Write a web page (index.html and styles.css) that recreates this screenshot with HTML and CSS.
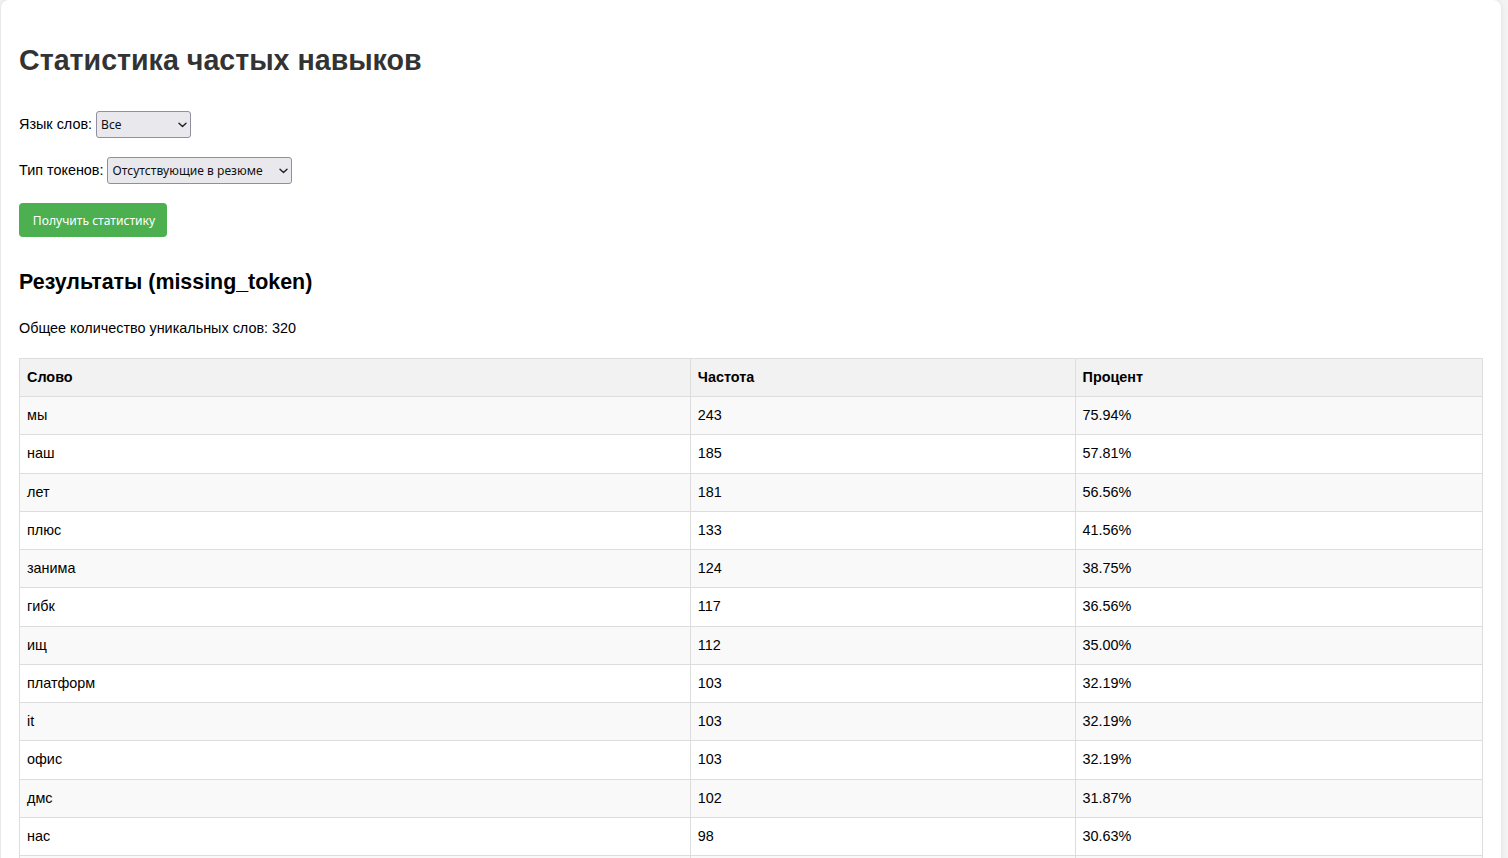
FILE: index.html
```html
<!DOCTYPE html>
<html lang="ru">
<head>
<meta charset="utf-8">
<title>Статистика частых навыков</title>
<link rel="stylesheet" href="styles.css">
</head>
<body>
<div class="container">
  <h1 class="title">Статистика частых навыков</h1>
  <div class="form-group">
    <label class="label" for="lang">Язык слов:</label>
    <span class="select-wrap">
      <select id="lang" class="select select-lang">
        <option>Все</option>
      </select>
      <svg class="chevron" width="9" height="6" viewBox="0 0 9 6"><path d="M1 1.2 L4.5 4.6 L8 1.2" fill="none" stroke="#222" stroke-width="1.4" stroke-linecap="round" stroke-linejoin="round"/></svg>
    </span>
  </div>
  <div class="form-group">
    <label class="label" for="type">Тип токенов:</label>
    <span class="select-wrap">
      <select id="type" class="select select-type">
        <option>Отсутствующие в резюме</option>
      </select>
      <svg class="chevron" width="9" height="6" viewBox="0 0 9 6"><path d="M1 1.2 L4.5 4.6 L8 1.2" fill="none" stroke="#222" stroke-width="1.4" stroke-linecap="round" stroke-linejoin="round"/></svg>
    </span>
  </div>
  <button class="btn" type="button">Получить статистику</button>

  <h2 class="subtitle">Результаты (missing_token)</h2>
  <p class="total">Общее количество уникальных слов: 320</p>

  <table class="stats">
    <tr><th class="c-word">Слово</th><th class="c-freq">Частота</th><th class="c-pct">Процент</th></tr>
    <tr><td>мы</td><td>243</td><td>75.94%</td></tr>
    <tr><td>наш</td><td>185</td><td>57.81%</td></tr>
    <tr><td>лет</td><td>181</td><td>56.56%</td></tr>
    <tr><td>плюс</td><td>133</td><td>41.56%</td></tr>
    <tr><td>занима</td><td>124</td><td>38.75%</td></tr>
    <tr><td>гибк</td><td>117</td><td>36.56%</td></tr>
    <tr><td>ищ</td><td>112</td><td>35.00%</td></tr>
    <tr><td>платформ</td><td>103</td><td>32.19%</td></tr>
    <tr><td>it</td><td>103</td><td>32.19%</td></tr>
    <tr><td>офис</td><td>103</td><td>32.19%</td></tr>
    <tr><td>дмс</td><td>102</td><td>31.87%</td></tr>
    <tr><td>нас</td><td>98</td><td>30.63%</td></tr>
    <tr><td>&nbsp;</td><td>&nbsp;</td><td>&nbsp;</td></tr>
  </table>
</div>
</body>
</html>
```

FILE: styles.css
```css
html, body {
  margin: 0;
  padding: 0;
}

body {
  background: #f4f4f4;
  font-family: "Liberation Sans", Arial, sans-serif;
  font-size: 14.4px;
  color: #000;
  padding-left: 1px;
}

.container {
  width: 1500px;
  box-sizing: border-box;
  background: #fff;
  border-radius: 8px;
  box-shadow: 0 0 6px rgba(0, 0, 0, 0.1);
  padding: 24px 18px 20px 18px;
}

.title {
  font-size: 28.6px;
  font-weight: bold;
  color: #333;
  line-height: 33px;
  margin: 19.5px 0 34.5px 0;
}

.form-group {
  display: flex;
  align-items: center;
  gap: 4px;
  margin-bottom: 19px;
}

.label {
  line-height: 17px;
}

.select-wrap {
  position: relative;
  display: block;
  height: 27px;
}

.select {
  appearance: none;
  -webkit-appearance: none;
  box-sizing: border-box;
  display: block;
  height: 27px;
  margin: 0;
  padding: 0 20px 0 4px;
  font-family: "Noto Sans", "Open Sans", sans-serif;
  font-size: 12.1px;
  color: #111;
  border: 1px solid #8f8f9d;
  border-radius: 3px;
  background-color: #e9e9ed;
}

.chevron {
  position: absolute;
  right: 4px;
  top: 11px;
  pointer-events: none;
}

.select-lang {
  width: 95px;
}

.select-type {
  width: 185px;
}

.btn {
  display: block;
  box-sizing: border-box;
  width: 148px;
  height: 34px;
  background: #4caf50;
  color: #fff;
  border: none;
  border-radius: 4px;
  padding: 0 0 0 2px;
  font-family: "Noto Sans", "Open Sans", sans-serif;
  font-size: 12.1px;
  cursor: pointer;
}

.subtitle {
  font-size: 21.4px;
  font-weight: bold;
  line-height: 25px;
  margin: 32.5px 0 25px 0;
}

.total {
  line-height: 16.5px;
  margin: 0 0 22px 0;
}

.stats {
  width: 100%;
  border-collapse: collapse;
}

.stats th,
.stats td {
  border: 1px solid #ddd;
  padding: 10px 8px 10px 7px;
  line-height: 17.23px;
  text-align: left;
}

.stats th {
  background: #f2f2f2;
  font-weight: bold;
}

.stats tr:nth-child(even) td {
  background: #f9f9f9;
}

.c-word { width: 45.85%; }
.c-freq { width: 26.3%; }
.c-pct { width: 27.85%; }
```
